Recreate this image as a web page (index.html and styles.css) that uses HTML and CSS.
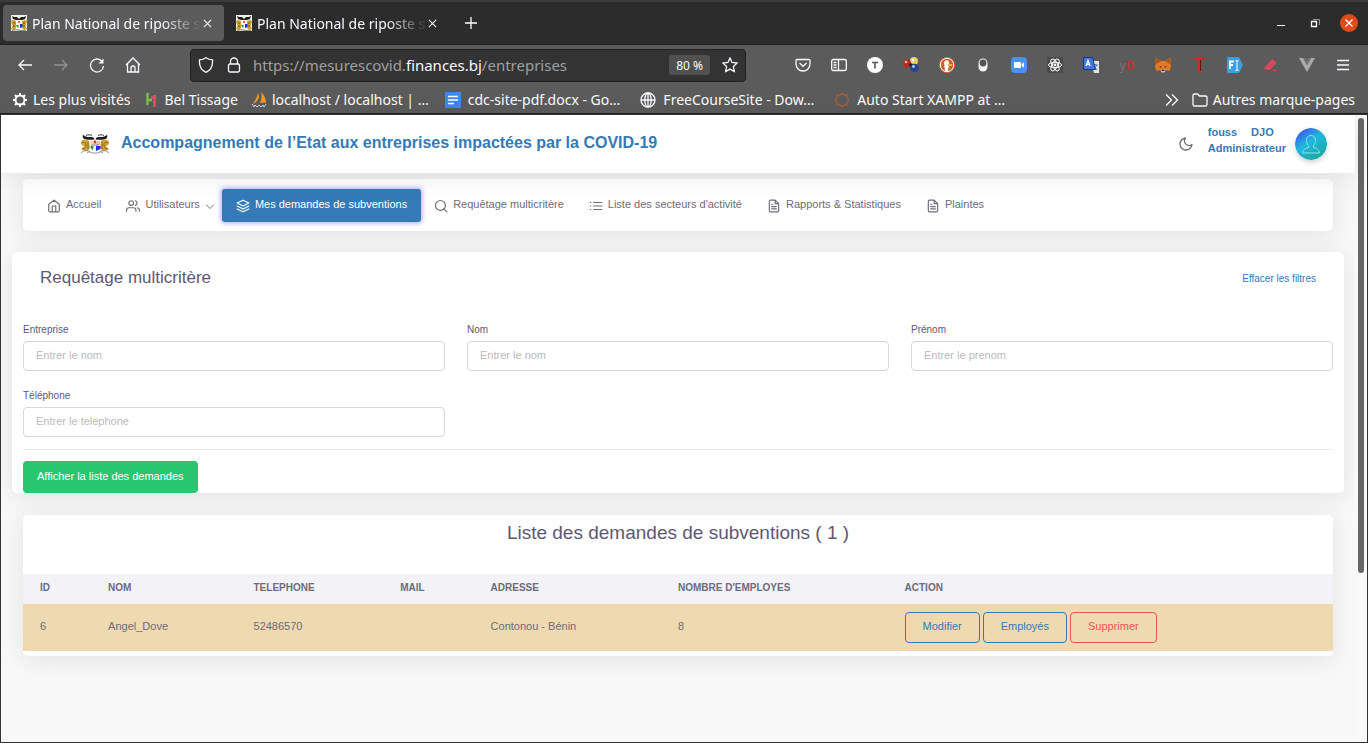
FILE: index.html
```html
<!DOCTYPE html>
<html lang="fr">
<head>
<meta charset="utf-8">
<title>Plan National de riposte</title>
<link rel="stylesheet" href="styles.css">
</head>
<body>
<svg class="defs" width="0" height="0" aria-hidden="true">
  <symbol id="arms" viewBox="0 0 30 20">
    <path d="M3 .5c1 2 4 2.500 7 2.500 3 0 4 .5 4.500 2.500C11 6 5 6 3.500 4.500 2.500 3.500 2.500 1.500 3 .5zM27 .5c-1 2-4 2.500-7 2.500-3 0-4 .5-4.500 2.500C19 6 25 6 26.500 4.500c1-1 1-3 .5-4z" fill="#1c2026"/>
    <path d="M6 1.500c2-1 4-1 6 0M24 1.500c-2-1-4-1-6 0" fill="none" stroke="#333a44"/>
    <path d="M1 8c2-3 5-3 8-1l1 7-2 3c-3 1-5-1-7-2l3-2.500L1 10zM29 8c-2-3-5-3-8-1l-1 7 2 3c3 1 5-1 7-2l-3-2.500 3-2.500z" fill="#d0a437"/>
    <path d="M2 9c3-2 4 0 4 2s-1 4-4 4M28 9c-3-2-4 0-4 2s1 4 4 4M8 8v7M22 8v7" fill="none" stroke="#7d5a12" stroke-width=".8"/>
    <path d="M10 7h10v7c0 2-3 3-5 4-2-1-5-2-5-4z" fill="#f7f3ea"/>
    <path d="M10.500 7h3.500v3h-3.500z" fill="#f1d3a0"/><path d="M10.500 12h3l-.5 4-2-1.500z" fill="#2c9b45"/>
    <path d="M16 7h4v4h-4z" fill="#f3c0b0"/><path d="M16 12h4.500v3L16 17z" fill="#1b2be0"/>
    <path d="M14 6.500h2v3h-2z" fill="#d33"/><path d="M11 11h8" stroke="#555" stroke-width=".7"/>
    <path d="M1 19c3-3 6-3 9-1 3 1.500 7 1.500 10 0 3-2 6-2 9 1M7 19l3-1.500M23 19l-3-1.500" fill="none" stroke="#8a8a8a" stroke-width=".9"/>
  </symbol>
  <symbol id="favicon" viewBox="0 0 16 16">
    <path d="M0 0h16v16H0z" fill="#f4f1ea"/>
    <path d="M1 1l2 1h3l2 2 2-2h3l2-1-1 3-3 1H5L2 4z" fill="#1c1c1c"/>
    <path d="M0 6l2-1 3 1v7l-2 2-3-1 1.500-3zM16 6l-2-1-3 1v7l2 2 3-1-1.500-3z" fill="#c9a02c"/>
    <path d="M2 8h2M12 8h2M2 11h2M12 11h2" stroke="#6b5312"/>
    <path d="M5 6h6v6l-3 2-3-2z" fill="#fff6e0"/>
    <path d="M5 10h2.500v3L6 12z" fill="#2c9b45"/><path d="M9 9h2.500v3L9 13z" fill="#1b2be0"/><path d="M7 6h2v2H7z" fill="#e5663a"/>
    <path d="M1 15.500c4-2 10 1 14 0" fill="none" stroke="#555" stroke-width=".8"/>
  </symbol>
  <symbol id="cross" viewBox="0 0 10 10"><path d="M1 1l8 8M9 1L1 9" fill="none" stroke="currentColor" stroke-width="1.2"/></symbol>
  <symbol id="doc" viewBox="0 0 24 24"><path d="M14 2H6a2 2 0 0 0-2 2v16a2 2 0 0 0 2 2h12a2 2 0 0 0 2-2V8zM14 2v6h6M16 13H8M16 17H8M10 9H8"/></symbol>
</svg>

<div class="window">
  <div class="tabbar">
    <div class="tab tab-active">
      <svg class="i16"><use href="#favicon"/></svg>
      <span class="tab-title">Plan National de riposte s</span>
      <button class="tab-close" aria-label="Fermer l’onglet"><svg class="i9"><use href="#cross"/></svg></button>
    </div>
    <div class="tab">
      <svg class="i16"><use href="#favicon"/></svg>
      <span class="tab-title">Plan National de riposte s</span>
      <button class="tab-close" aria-label="Fermer l’onglet"><svg class="i9"><use href="#cross"/></svg></button>
    </div>
    <button class="new-tab" aria-label="Nouvel onglet"><svg class="i12" viewBox="0 0 12 12"><path d="M6 0v12M0 6h12" stroke="#fff" stroke-width="1.3"/></svg></button>
    <div class="window-buttons">
      <button aria-label="Réduire"><svg class="i18" viewBox="0 0 18 18"><path d="M5 11.500h8" stroke="#fff"/></svg></button>
      <button aria-label="Restaurer"><svg class="i18" viewBox="0 0 18 18" fill="none"><path d="M7 5.500h6.500V11" stroke="#999"/><path d="M5.500 7.500h5v5h-5z" stroke="#fff" stroke-width="1.300"/></svg></button>
      <button aria-label="Fermer"><svg class="i18" viewBox="0 0 18 18"><circle cx="9" cy="9" r="9" fill="#e2491b"/><path d="M5.500 5.500l7 7M12.500 5.500l-7 7" stroke="#fff" stroke-width="1.400"/></svg></button>
    </div>
  </div>

  <div class="toolbar">
    <button class="tool" aria-label="Précédent"><svg class="i16 line" viewBox="0 0 16 16"><path d="M15 8H2M7 3L2 8l5 5"/></svg></button>
    <button class="tool dim" aria-label="Suivant"><svg class="i16 line" viewBox="0 0 16 16"><path d="M1 8h13M9 3l5 5-5 5"/></svg></button>
    <button class="tool" aria-label="Actualiser"><svg class="i16 line" viewBox="0 0 16 16"><path d="M13.500 5A6.500 6.500 0 1 0 14.500 9"/><path d="M14.500 1.500v5h-5z" fill="currentColor" stroke="none"/></svg></button>
    <button class="tool" aria-label="Accueil"><svg class="i16 line" viewBox="0 0 16 16"><path d="M1 8l7-7 7 7M2.500 7v8h11V7M6 15v-4a2 2 0 0 1 4 0v4"/></svg></button>
    <div class="urlbar">
      <svg class="i16 line" viewBox="0 0 16 16"><path d="M8 .8c2 1.500 4 2 6.500 2C15 9 12.500 13.500 8 15.300 3.500 13.500 1 9 1.500 2.800 4 2.800 6 2.300 8 .8z"/></svg>
      <svg class="i16 line" viewBox="0 0 16 16"><rect x="2.500" y="7" width="11" height="8" rx="1.500"/><path d="M4.500 7V4.500a3.500 3.500 0 0 1 7 0V7"/></svg>
      <span class="url">https://mesurescovid.<b>finances.bj</b>/entreprises</span>
      <button class="zoom">80 %</button>
      <button class="star" aria-label="Marquer cette page"><svg class="i16 line" viewBox="0 0 16 16"><path d="M8 1l2.100 4.500 4.900.6-3.600 3.400.9 5L8 12.100l-4.300 2.400.9-5L1 6.100l4.900-.6z"/></svg></button>
    </div>
    <button class="tool" aria-label="Pocket"><svg class="i16 line" viewBox="0 0 16 16"><path d="M2 2.500h12a1 1 0 0 1 1 1V7a7 7 0 0 1-14 0V3.500a1 1 0 0 1 1-1zM4.500 6L8 9.300 11.500 6"/></svg></button>
    <button class="tool" aria-label="Panneau latéral"><svg class="i16 line" viewBox="0 0 16 16"><rect x=".7" y="2.500" width="14.600" height="11" rx="1.500"/><path d="M7.500 3v10M2.500 5.500h3M2.500 8h3M2.500 10.500h3"/></svg></button>
    <button class="tool" aria-label="T"><svg class="i16" viewBox="0 0 16 16"><circle cx="8" cy="8" r="8" fill="#fff"/><path d="M5 5.500h6M8 5.500v6" stroke="#555" stroke-width="1.600"/></svg></button>
    <button class="tool" aria-label="Molécule"><svg class="i16" viewBox="0 0 16 16"><circle cx="11" cy="4" r="4" fill="#e9cd62"/><circle cx="10" cy="3" r="1.500" fill="#fff"/><circle cx="4" cy="6.500" r="4" fill="#b82a20"/><circle cx="3" cy="5" r="1.300" fill="#f4b0a5"/><circle cx="8" cy="8" r="1.800" fill="#171717"/><circle cx="11.500" cy="11" r="4.300" fill="#24458f"/><circle cx="10.500" cy="9.500" r="1.400" fill="#b9cbf5"/></svg></button>
    <button class="tool" aria-label="DuckDuckGo"><svg class="i16" viewBox="0 0 16 16"><circle cx="8" cy="8" r="8" fill="#de5833"/><circle cx="8" cy="8" r="6.700" fill="none" stroke="#fff"/><path d="M6 14L5 6c0-3 4-4 5-1v3l-1 6z" fill="#fff"/><path d="M9 7h4v2H9z" fill="#f7b731"/><path d="M9 11l3 1-2 2z" fill="#4caf50"/></svg></button>
    <button class="tool" aria-label="Interrupteur"><svg class="i16" viewBox="0 0 16 16"><rect x="3.500" y="1.500" width="9" height="13" rx="4.500" fill="#f2f2f2"/><circle cx="8" cy="6" r="3.400" fill="#555"/></svg></button>
    <button class="tool" aria-label="Zoom"><svg class="i16" viewBox="0 0 16 16"><rect width="16" height="16" rx="4" fill="#4a90f8"/><path d="M3 5h6a1 1 0 0 1 1 1v5H4a1 1 0 0 1-1-1zM10.700 7L13 5.300v5.400L10.700 9z" fill="#fff"/></svg></button>
    <button class="tool" aria-label="React"><svg class="i16" viewBox="0 0 16 16"><path d="M0 0h16v16H0z" fill="#4a4a4a"/><g fill="none" stroke="#fff"><ellipse cx="8" cy="8" rx="6.500" ry="2.700"/><ellipse cx="8" cy="8" rx="6.500" ry="2.700" transform="rotate(60 8 8)"/><ellipse cx="8" cy="8" rx="6.500" ry="2.700" transform="rotate(120 8 8)"/></g><circle cx="8" cy="8" r="1.400" fill="#fff"/></svg></button>
    <button class="tool" aria-label="Traduction"><svg class="i16" viewBox="0 0 16 16"><path d="M8 4h8v12h-5z" fill="#e4e4e4"/><path d="M10 8h5M12.500 7v1M11 12l3-4M11 9l3 4" stroke="#5b7bb0"/><path d="M.5.500h9l3 12H.5z" fill="#3f76e8" stroke="#173a80"/><path d="M3 9l2-5.500L7 9M3.700 7.300h2.600" fill="none" stroke="#fff" stroke-width="1.300"/></svg></button>
    <button class="tool yd" aria-label="yD"><span>y</span><b>D</b></button>
    <button class="tool" aria-label="MetaMask"><svg class="i16" viewBox="0 0 16 16"><path d="M0 .5L6 4h4l6-3.500-.8 6.500.8 3-1.500 4-4-1-1 2h-3l-1-2-4 1L0 10l.8-3z" fill="#e17a25"/><path d="M0 .5L6 4 1 7zM16 .5L10 4l5 3z" fill="#b0561d"/><path d="M4 9l2.500.5-.5 1.500zM12 9l-2.500.5.500 1.500z" fill="#3a2a22"/><path d="M5.500 12.500h5l-1 3h-3z" fill="#c9c3bd"/><path d="M7 12.500h2l.5 1.500h-3z" fill="#333"/></svg></button>
    <button class="tool" aria-label="Typographie"><svg class="i16" viewBox="0 0 16 16"><path d="M2 1h12l.5 4-1-2-3.500-.5V13l1.500 2h-6L7 13V2.500L3.500 3l-1 2z" fill="#d12b1a"/><path d="M9.500 3v11" stroke="#6d1008"/></svg></button>
    <button class="tool" aria-label="FI"><svg class="i16" viewBox="0 0 16 16"><path d="M1 0h11l4 8-4 8H1a1 1 0 0 1-1-1V1a1 1 0 0 1 1-1z" fill="#3d9fe0"/><path d="M3 12V4.500h4M3 8h3" fill="none" stroke="#fff" stroke-width="1.800"/><path d="M8.500 3.500l1.500.5 1.500-.5M10 4v9M8.500 13.500l1.500-.5 1.500.5" fill="none" stroke="#fff"/></svg></button>
    <button class="tool" aria-label="Gomme"><svg class="i16" viewBox="0 0 16 16"><path d="M9.500 2l4 4L7 13H3L1 11z" fill="#d9485a"/><path d="M10 13.500h4" stroke="#d9485a" stroke-width="1.200"/></svg></button>
    <button class="tool" aria-label="Vue"><svg class="i16" viewBox="0 0 16 16"><path d="M0 1h4l4 7 4-7h4L8 15z" fill="#ababab"/><path d="M4 1h2.500L8 4l1.500-3H12L8 8z" fill="#747474"/></svg></button>
    <button class="tool" aria-label="Menu"><svg class="i16 line" viewBox="0 0 16 16"><path d="M2 3.500h12M2 8h12M2 12.500h12"/></svg></button>
  </div>

  <div class="bookmarks">
    <a href="#" class="bm"><svg class="i16" viewBox="0 0 16 16"><circle cx="8" cy="8" r="4.500" fill="none" stroke="#fff" stroke-width="2"/><path d="M8 1v3M8 12v3M1 8h3M12 8h3M3 3l2 2M11 11l2 2M13 3l-2 2M5 11l-2 2" stroke="#fff" stroke-width="2"/></svg>Les plus visités</a>
    <a href="#" class="bm"><svg class="i16" viewBox="0 0 16 16" fill="none" stroke-width="2.400"><path d="M3.500 1v12M3.500 8H8" stroke="#7ac143"/><path d="M7 5.500h5M10.500 3v12" stroke="#ef4a60"/></svg>Bel Tissage</a>
    <a href="#" class="bm"><svg class="i16" viewBox="0 0 16 16"><path d="M7 1c2 4 1 8-5 11 2-4 4-6 5-11zM10 0c4 4 5 8 5 11-2-1-4 0-6 0 2-4 2-7 1-11z" fill="#f89c1c"/><path d="M1 12l2 3 1-2 2 2 2-2 2 2 2-2 1 2 2-3" fill="none" stroke="#cdd0ef"/></svg>localhost / localhost | …</a>
    <a href="#" class="bm bm-doc"><svg class="i16" viewBox="0 0 16 16"><rect width="16" height="16" rx="1" fill="#4285f4"/><path d="M3 4.500h10M3 8h10M3 11.500h6" stroke="#fff" stroke-width="1.700"/></svg>cdc-site-pdf.docx - Go…</a>
    <a href="#" class="bm bm-wide"><svg class="i16 line" viewBox="0 0 16 16"><circle cx="8" cy="8" r="7"/><ellipse cx="8" cy="8" rx="3.200" ry="7"/><path d="M1 8h14M8 1v14"/></svg>FreeCourseSite - Dow…</a>
    <a href="#" class="bm bm-wide"><svg class="i16" viewBox="0 0 16 16"><path d="M8 1l2 2h3v3l2 2-2 2v3h-3l-2 2-2-2H3v-3L1 8l2-2V3h3z" fill="none" stroke="#a25f3a" stroke-width="1.300"/></svg>Auto Start XAMPP at …</a>
    <button class="more" aria-label="Autres"><svg class="i16 line" viewBox="0 0 16 16"><path d="M2 2.500L7.500 8 2 13.500M8 2.500L13.500 8 8 13.500"/></svg></button>
    <a href="#" class="bm bm-last"><svg class="i16 line" viewBox="0 0 16 16"><path d="M1 3.500a1.500 1.500 0 0 1 1.500-1.500h3L7.500 4h6A1.500 1.500 0 0 1 15 5.500v7a1.500 1.500 0 0 1-1.500 1.500h-11A1.500 1.500 0 0 1 1 12.500z"/></svg>Autres marque-pages</a>
  </div>

  <div class="viewport">
    <div class="page">
      <header class="site-header">
        <svg class="logo"><use href="#arms"/></svg>
        <h1>Accompagnement de l’Etat aux entreprises impactées par la COVID-19</h1>
        <button class="theme" aria-label="Mode sombre"><svg class="i16 stroke" viewBox="0 0 24 24"><path d="M21 12.800A9 9 0 1 1 11.200 3a7 7 0 0 0 9.800 9.800z"/></svg></button>
        <div class="user"><span class="user-name"><span>fouss</span><span>DJO</span></span><span>Administrateur</span></div>
        <svg class="avatar" viewBox="0 0 32 32"><defs><linearGradient id="ag" x1="0" y1="0" x2=".7" y2="1"><stop offset="0" stop-color="#4338f0"/><stop offset=".5" stop-color="#1fb8dc"/><stop offset="1" stop-color="#1aa9a4"/></linearGradient></defs><circle cx="16" cy="16" r="16" fill="url(#ag)"/><path d="M16 7.500c-6 0-5 8-2.500 10v2C10 20.500 8 21.500 7.500 25h17c-.5-3.500-2.500-4.500-6-5.500v-2c2.500-2 3.500-10-2.500-10z" fill="none" stroke="#8fe3ea"/></svg>
      </header>

      <main>
        <nav class="card nav">
          <a href="#"><svg class="i14 stroke" viewBox="0 0 24 24"><path d="M3 9l9-7 9 7v11a2 2 0 0 1-2 2H5a2 2 0 0 1-2-2zM9 22V12h6v10"/></svg><span>Accueil</span></a>
          <a href="#" class="has-menu"><svg class="i14 stroke" viewBox="0 0 24 24"><path d="M17 21v-2a4 4 0 0 0-4-4H5a4 4 0 0 0-4 4v2M23 21v-2a4 4 0 0 0-3-3.870M16 3.130a4 4 0 0 1 0 7.750"/><circle cx="9" cy="7" r="4"/></svg><span>Utilisateurs</span><svg class="chev stroke" viewBox="0 0 10 10"><path d="M1.500 4L5 7.500 8.500 4" stroke-width="1"/></svg></a>
          <a href="#" class="active"><svg class="i14 stroke" viewBox="0 0 24 24"><path d="M12 2L2 7l10 5 10-5zM2 17l10 5 10-5M2 12l10 5 10-5"/></svg><span>Mes demandes de subventions</span></a>
          <a href="#"><svg class="i14 stroke" viewBox="0 0 24 24"><circle cx="11" cy="11" r="8.500"/><path d="M22 22l-5-5"/></svg><span>Requêtage multicritère</span></a>
          <a href="#"><svg class="i14 stroke" viewBox="0 0 24 24"><path d="M8 6h14M8 12h14M8 18h14M2 6h1M2 12h1M2 18h1"/></svg><span>Liste des secteurs d'activité</span></a>
          <a href="#"><svg class="i14 stroke"><use href="#doc"/></svg><span>Rapports &amp; Statistiques</span></a>
          <a href="#"><svg class="i14 stroke"><use href="#doc"/></svg><span>Plaintes</span></a>
        </nav>

        <form class="card filters">
          <div class="filters-head"><h2>Requêtage multicritère</h2><a href="#">Effacer les filtres</a></div>
          <div class="fields">
            <div class="field"><label for="ent">Entreprise</label><input id="ent" type="text" placeholder="Entrer le nom"></div>
            <div class="field"><label for="nom">Nom</label><input id="nom" type="text" placeholder="Entrer le nom"></div>
            <div class="field"><label for="pre">Prénom</label><input id="pre" type="text" placeholder="Entrer le prenom"></div>
            <div class="field"><label for="tel">Téléphone</label><input id="tel" type="text" placeholder="Entrer le telephone"></div>
          </div>
          <div class="submit-row"><button type="button" class="submit">Afficher la liste des demandes</button></div>
        </form>

        <section class="card list">
          <h2>Liste des demandes de subventions ( 1 )</h2>
          <table>
            <colgroup><col class="c-id"><col class="c-nom"><col class="c-tel"><col class="c-mail"><col class="c-adr"><col class="c-nb"><col></colgroup>
            <thead><tr><th>ID</th><th>NOM</th><th>TELEPHONE</th><th>MAIL</th><th>ADRESSE</th><th>NOMBRE D'EMPLOYES</th><th>ACTION</th></tr></thead>
            <tbody><tr><td>6</td><td>Angel_Dove</td><td>52486570</td><td></td><td>Contonou - Bénin</td><td>8</td>
              <td><div class="actions"><button class="btn">Modifier</button><button class="btn">Employés</button><button class="btn danger">Supprimer</button></div></td></tr></tbody>
          </table>
        </section>
      </main>
    </div>
    <div class="scrollbar"><div class="thumb"></div></div>
  </div>
</div>
</body>
</html>
```

FILE: styles.css
```css
* { box-sizing: border-box; }
body { margin: 0; font-family: "Liberation Sans", Arial, sans-serif; font-size: 11px; color: #6e6b7b; }
button { font: inherit; color: inherit; background: none; border: 0; padding: 0; }
a { color: inherit; text-decoration: none; }
h1, h2 { margin: 0; }
svg { display: block; flex: none; }
.defs { position: absolute; }
.i9 { width: 9px; height: 9px; }
.i12 { width: 12px; height: 12px; }
.i14 { width: 14px; height: 14px; }
.i16 { width: 16px; height: 16px; }
.i18 { width: 18px; height: 18px; }
.line { fill: none; stroke: currentColor; stroke-width: 1.3; }
.stroke { fill: none; stroke: currentColor; stroke-width: 2; stroke-linecap: round; stroke-linejoin: round; }

.window { min-height: 100vh; display: flex; flex-direction: column; background: #5b5b5b; }

/* Browser chrome */
.tabbar, .toolbar, .bookmarks { font-family: "Noto Sans", "Open Sans", sans-serif; font-size: 14px; color: #fbfbfe; display: flex; align-items: center; }
.tabbar { height: 45px; padding: 0 10px 0 3px; gap: 4px; background: #2c2c2c; border-top: 2px solid #3a3a3a; border-bottom: 1px solid #202020; }
.tab { width: 221px; height: 36px; padding: 0 12px 0 8px; display: flex; align-items: center; border-radius: 4px; }
.tab-active { background: #5b5b5b; }
.tab-title { flex: 1; min-width: 0; margin-left: 5px; white-space: nowrap; -webkit-mask-image: linear-gradient(to right, #000 75%, transparent); mask-image: linear-gradient(to right, #000 75%, transparent); }
.new-tab { width: 36px; display: grid; place-items: center; }
.window-buttons { margin-left: auto; display: flex; gap: 16px; }
.toolbar { height: 42px; padding: 0 7px 2px; }
.tool { width: 36px; height: 36px; display: flex; align-items: center; justify-content: center; }
.dim { color: #929292; }
.yd { color: #747474; font-size: 12px; }
.yd b { color: #c62f2f; }
.urlbar { flex: 1; min-width: 0; height: 33px; margin: 0 39px; padding: 0 7px; display: flex; align-items: center; gap: 12px; background: #333; border: 1px solid #202020; border-radius: 4px; color: #fbfbfe; }
.url { flex: 1; min-width: 0; white-space: nowrap; color: #a0a0a0; font-size: 15px; margin-left: -1px; }
.url b { font-weight: 400; color: #fbfbfe; }
.zoom { height: 20px; padding: 0 7px; border-radius: 3px; background: #515151; font-size: 12px; white-space: nowrap; }
.bookmarks { height: 28px; padding: 0 13px 1px 12px; border-bottom: 2px solid #202020; white-space: nowrap; }
.bm { display: flex; align-items: center; gap: 5px; }
.bm + .bm { margin-left: 13px; }
.bm + .bm-doc { margin-left: 16px; gap: 7px; }
.bm + .bm-wide { margin-left: 20px; gap: 7px; }
.more { margin-left: auto; }
.bm-last { margin-left: 12px; }

/* Page */
.viewport { flex: 1; display: flex; margin: 0 1px 1px; background: #f8f8f8; outline: 1px solid #333; }
.page { flex: 1; min-width: 0; }
.scrollbar { width: 12px; padding: 3px 3px 0; background: #f9f9f9; }
.thumb { height: 455px; border-radius: 3px; background: #666; }
.site-header { position: relative; height: 58px; padding: 0 28px 0 79px; display: flex; align-items: center; background: #fff; box-shadow: 0 4px 24px rgba(34, 41, 47, .1); }
.logo { width: 30px; height: 20px; }
h1 { margin: 0 auto 3px 11px; font-size: 16px; line-height: 20px; color: #337ab7; }
.theme { margin-right: 14px; }
.user { display: flex; flex-direction: column; margin: 0 9px 8px 0; font-weight: 700; line-height: 16px; color: #337ab7; }
.user-name { display: flex; gap: 14px; }
.avatar { width: 32px; height: 32px; border-radius: 50%; box-shadow: 0 2px 5px rgba(0, 0, 0, .2); }
main { padding: 6px 11px 0; }
.card { background: #fff; border-radius: 5px; box-shadow: 0 4px 24px rgba(34, 41, 47, .1); }
.nav { display: flex; gap: 1px; margin: 0 11px; padding: 10px 12px 9px; }
.nav a { display: flex; align-items: center; gap: 5px; height: 33px; padding: 0 12px; border-radius: 3px; white-space: nowrap; }
.nav span { padding-bottom: 3px; }
.nav .has-menu { padding-right: 6px; }
.chev { width: 10px; height: 10px; }
.nav .active { padding: 0 14px; color: #fff; background: #337ab7; box-shadow: 0 0 5px 1px rgba(115, 103, 240, .6); }
.filters { margin: 21px 0 0; padding: 0 11px; }
.filters-head { display: flex; justify-content: space-between; align-items: center; padding: 16px 17px 0; }
h2 { font-size: 17px; line-height: 20px; font-weight: 400; color: #5e5873; }
.filters-head a { font-size: 10px; color: #337ab7; }
.fields { display: grid; grid-template-columns: repeat(3, 1fr); gap: 18px 22px; margin-top: 35px; padding-bottom: 12px; border-bottom: 1px solid #ebe9f1; }
.field { display: flex; flex-direction: column; gap: 4px; }
label { font-size: 10px; line-height: 14px; color: #5e5873; }
input { height: 30px; width: 100%; padding: 0 12px 2px; border: 1px solid #d8d6de; border-radius: 4px; font: inherit; color: #6e6b7b; }
input::placeholder { color: #b9b9c3; }
.submit-row { padding-top: 11px; display: flex; }
.submit { height: 32px; padding: 0 14px 3px; border-radius: 4px; background: #28c76f; color: #fff; }
.list { margin: 22px 11px 0; padding-bottom: 5px; }
.list h2 { padding: 8px 0 31px; font-size: 19px; text-align: center; }
table { width: 100%; table-layout: fixed; border-collapse: collapse; }
th, td { padding: 0 17px; text-align: left; white-space: nowrap; }
th { height: 30px; padding-bottom: 3px; font-size: 10px; background: #f3f2f7; }
td { height: 47px; padding-bottom: 3px; background: #eed9b0; }
.c-id { width: 5.2%; }
.c-nom { width: 11.1%; }
.c-tel { width: 11.2%; }
.c-mail { width: 6.9%; }
.c-adr { width: 14.3%; }
.c-nb { width: 17.3%; }
.actions { display: flex; gap: 3px; padding-top: 3px; }
.btn { height: 31px; padding: 0 17px 3px; border: 1px solid #337ab7; border-radius: 4px; color: #337ab7; }
.danger { border-color: #ea5455; color: #ea5455; }
```
